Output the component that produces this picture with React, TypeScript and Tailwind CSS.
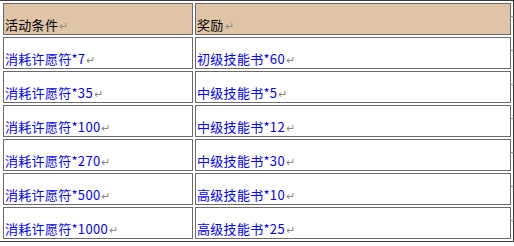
import React from "react";

const rows: [string, string][] = [
  ["消耗许愿符*7", "初级技能书*60"],
  ["消耗许愿符*35", "中级技能书*5"],
  ["消耗许愿符*100", "中级技能书*12"],
  ["消耗许愿符*270", "中级技能书*30"],
  ["消耗许愿符*500", "高级技能书*10"],
  ["消耗许愿符*1000", "高级技能书*25"],
];

function Mark() {
  return <span className="ml-[1px] mb-[1px] text-[11px] leading-none text-[#8a8a8a]">↵</span>;
}

function Cell({ text, header, last }: { text: string; header?: boolean; last?: boolean }) {
  return (
    <div
      className={`relative flex h-[32px] items-end border border-[#6a6a6a] pb-[2px] pl-[1px] ${
        header ? "bg-[#dfc5a5] text-black" : "bg-white text-[#0000ff]"
      }`}
    >
      <span className="text-[13px] leading-[14px] tracking-[0.3px] whitespace-nowrap">{text}</span>
      <Mark />
      {last && <span className="absolute top-[12px] right-[-4px] z-10 h-px w-[4px] bg-[#8a8a8a]" />}
    </div>
  );
}

export default function App() {
  return (
    <div
      className="relative h-[246px] w-[514px] overflow-hidden bg-white"
      style={{ fontFamily: '"Noto Sans CJK SC", "Noto Sans", sans-serif' }}
    >
      <div className="grid w-[514px] grid-cols-[190px_1fr] gap-x-[2px] gap-y-[2px] border-t border-r border-b border-[#3a3a3a] pt-[2px] pr-[2px] pb-[2px] pl-[3px]">
        <Cell text="活动条件" header />
        <Cell text="奖励" header last />
        {rows.map(([cond, reward]) => (
          <React.Fragment key={cond}>
            <Cell text={cond} />
            <Cell text={reward} last />
          </React.Fragment>
        ))}
      </div>
    </div>
  );
}
